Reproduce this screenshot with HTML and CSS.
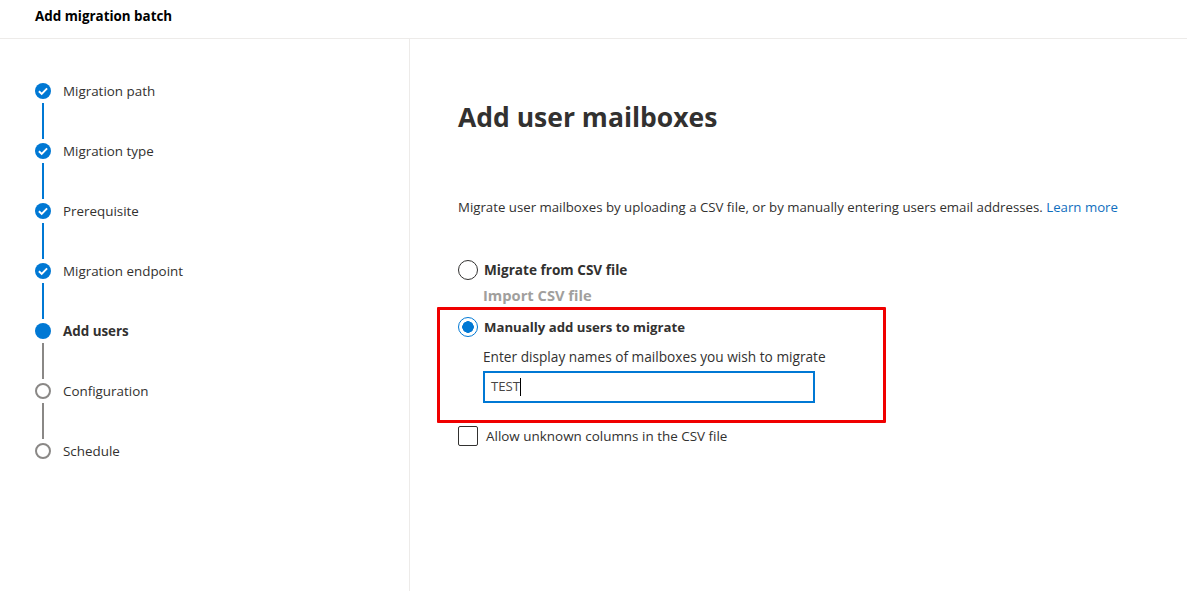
FILE: index.html
```html
<!DOCTYPE html>
<html lang="en">
<head>
    <meta charset="UTF-8">
    <meta name="viewport" content="width=device-width, initial-scale=1.0">
    <title>Add migration batch</title>
    <link rel="stylesheet" href="styles.css">
</head>
<body>
    <header class="top-bar">Add migration batch</header>

    <div class="wizard">
        <nav class="steps">
            <div class="step done">
                <div class="marker">
                    <span class="dot"><svg viewBox="0 0 16 16" width="16" height="16"><path d="M3.9 8.2l2.8 2.7 5.4-5.6" fill="none" stroke="#fff" stroke-width="1.9"/></svg></span>
                    <span class="line"></span>
                </div>
                <span class="step-name">Migration path</span>
            </div>
            <div class="step done">
                <div class="marker">
                    <span class="dot"><svg viewBox="0 0 16 16" width="16" height="16"><path d="M3.9 8.2l2.8 2.7 5.4-5.6" fill="none" stroke="#fff" stroke-width="1.9"/></svg></span>
                    <span class="line"></span>
                </div>
                <span class="step-name">Migration type</span>
            </div>
            <div class="step done">
                <div class="marker">
                    <span class="dot"><svg viewBox="0 0 16 16" width="16" height="16"><path d="M3.9 8.2l2.8 2.7 5.4-5.6" fill="none" stroke="#fff" stroke-width="1.9"/></svg></span>
                    <span class="line"></span>
                </div>
                <span class="step-name">Prerequisite</span>
            </div>
            <div class="step done">
                <div class="marker">
                    <span class="dot"><svg viewBox="0 0 16 16" width="16" height="16"><path d="M3.9 8.2l2.8 2.7 5.4-5.6" fill="none" stroke="#fff" stroke-width="1.9"/></svg></span>
                    <span class="line"></span>
                </div>
                <span class="step-name">Migration endpoint</span>
            </div>
            <div class="step current">
                <div class="marker">
                    <span class="dot"></span>
                    <span class="line"></span>
                </div>
                <span class="step-name">Add users</span>
            </div>
            <div class="step">
                <div class="marker">
                    <span class="dot"></span>
                    <span class="line"></span>
                </div>
                <span class="step-name">Configuration</span>
            </div>
            <div class="step last">
                <div class="marker">
                    <span class="dot"></span>
                </div>
                <span class="step-name">Schedule</span>
            </div>
        </nav>

        <main class="content">
            <h1>Add user mailboxes</h1>
            <p class="intro">Migrate user mailboxes by uploading a CSV file, or by manually entering users email addresses. <a href="#">Learn more</a></p>

            <div class="option first-option">
                <span class="radio"></span>
                <span class="option-label csv-label">Migrate from CSV file</span>
            </div>
            <div class="import-label">Import CSV file</div>

            <div class="option">
                <span class="radio checked"></span>
                <span class="option-label">Manually add users to migrate</span>
            </div>
            <label class="field-label" for="names">Enter display names of mailboxes you wish to migrate</label>
            <div class="text-box" id="names">TEST<span class="caret"></span></div>

            <div class="check-row">
                <span class="checkbox"></span>
                <span class="check-label">Allow unknown columns in the CSV file</span>
            </div>

            <div class="highlight"></div>
        </main>
    </div>
</body>
</html>
```

FILE: styles.css
```css
* {
    box-sizing: border-box;
}
html, body {
    height: 100%;
}
body {
    margin: 0;
    font-family: "Open Sans", "Noto Sans", Arial, sans-serif;
    font-size: 13.4px;
    color: #323130;
    background-color: white;
    overflow: hidden;
}
.top-bar {
    height: 39px;
    padding: 7px 0 0 35px;
    border-bottom: 1px solid #edebe9;
    font-size: 13.4px;
    font-weight: 700;
    line-height: 18px;
    color: #000;
}
.wizard {
    display: flex;
    height: 552px;
}
.steps {
    width: 410px;
    flex-shrink: 0;
    padding: 44px 0 0 35px;
    border-right: 1px solid #edebe9;
}
.step {
    display: flex;
    height: 60px;
    gap: 12px;
}
.marker {
    display: flex;
    flex-direction: column;
    align-items: center;
    width: 16px;
}
.dot {
    width: 16px;
    height: 16px;
    border-radius: 50%;
    border: 2px solid #8a8886;
    flex-shrink: 0;
}
.line {
    width: 2px;
    height: 36px;
    margin-top: 4px;
    background-color: #8a8886;
}
.step.done .dot {
    border: none;
    background-color: #0078d4;
}
.step.done .dot svg {
    display: block;
}
.step.done .line {
    background-color: #0078d4;
}
.step.current .dot {
    border: none;
    background-color: #0078d4;
}
.step-name {
    line-height: 16px;
}
.step.current .step-name {
    font-weight: 700;
}
.content {
    position: relative;
    flex: 1;
    padding: 60px 0 0 48px;
}
h1 {
    margin: 0;
    font-size: 26.5px;
    font-weight: 700;
    line-height: 36px;
}
.intro {
    margin: 62px 0 0;
    font-size: 13.24px;
    line-height: 20px;
}
.intro a {
    color: #106ebe;
    text-decoration: none;
}
.option {
    display: flex;
    align-items: center;
    gap: 6px;
    height: 20px;
}
.first-option {
    margin-top: 43px;
}
.radio {
    width: 20px;
    height: 20px;
    border-radius: 50%;
    border: 1px solid #323130;
    flex-shrink: 0;
}
.radio.checked {
    border-color: #0078d4;
    background: radial-gradient(circle, #0078d4 0, #0078d4 5.5px, white 6px);
}
.option-label {
    font-size: 13.2px;
    font-weight: 700;
}
.csv-label {
    font-size: 13.6px;
    margin-bottom: 2px;
}
.import-label {
    margin: 5px 0 0 25px;
    height: 20px;
    font-size: 14.7px;
    font-weight: 700;
    line-height: 20px;
    color: #a19f9d;
}
.import-label + .option {
    margin-top: 12px;
}
.field-label {
    display: block;
    margin: 10px 0 0 25px;
    font-size: 13.68px;
    font-weight: 500;
    line-height: 20px;
}
.text-box {
    width: 332px;
    height: 32px;
    margin: 4px 0 0 25px;
    padding: 0 6px;
    border: 2px solid #0078d4;
    font-size: 13.2px;
    line-height: 27px;
    color: #484644;
}
.caret {
    display: inline-block;
    width: 1px;
    height: 18px;
    background-color: #000;
    vertical-align: -5px;
}
.check-row {
    display: flex;
    align-items: center;
    gap: 8px;
    height: 20px;
    margin-top: 23px;
}
.checkbox {
    width: 20px;
    height: 20px;
    border: 1px solid #323130;
    border-radius: 2px;
    flex-shrink: 0;
}
.check-label {
    font-size: 13.45px;
}
/* red annotation box drawn over the form */
.highlight {
    position: absolute;
    left: 27px;
    top: 268px;
    width: 449px;
    height: 116px;
    border: 3px solid #f00000;
    border-radius: 1px;
    pointer-events: none;
}
```
